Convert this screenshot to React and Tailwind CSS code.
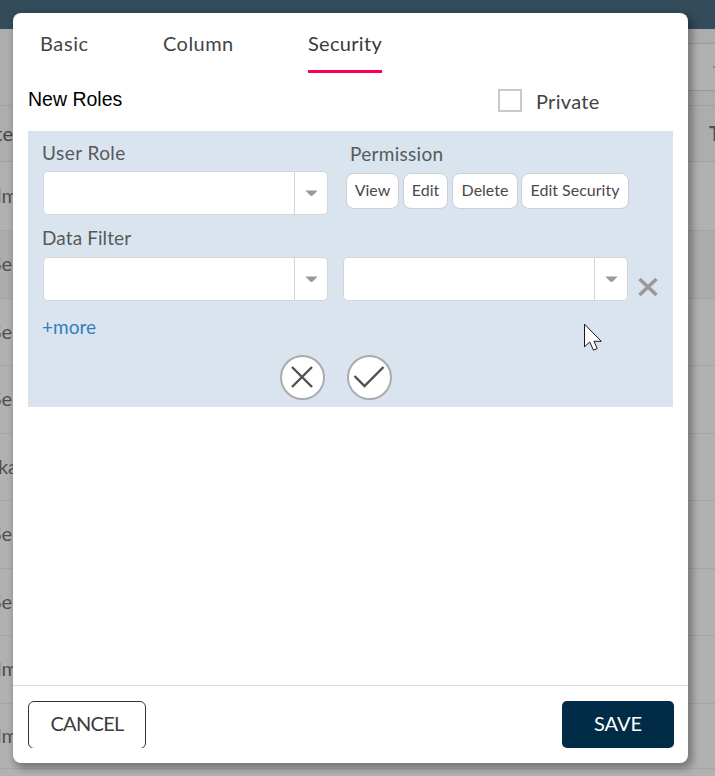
const rows = [
  { text: 'Adm', height: 'h-[69px]', bg: 'bg-[#b1b1b1]', nudge: 'w-[18px]' },
  { text: 'Se', height: 'h-[68px]', bg: 'bg-[#acacac]', nudge: 'w-[12px]' },
  { text: 'Se', height: 'h-[67px]', bg: 'bg-[#b1b1b1]', nudge: 'w-[12px]' },
  { text: 'Se', height: 'h-[68px]', bg: 'bg-[#b1b1b1]', nudge: 'w-[12px]' },
  { text: 'ka', height: 'h-[67px]', bg: 'bg-[#b1b1b1]', nudge: 'w-[18px]' },
  { text: 'Se', height: 'h-[68px]', bg: 'bg-[#b1b1b1]', nudge: 'w-[12px]' },
  { text: 'Se', height: 'h-[67px]', bg: 'bg-[#b1b1b1]', nudge: 'w-[12px]' },
  { text: 'Adm', height: 'h-[68px]', bg: 'bg-[#b1b1b1]', nudge: 'w-[18px]' },
  { text: 'Adm', height: 'h-[65px]', bg: 'bg-[#b1b1b1]', nudge: 'w-[18px]' },
];

function Backdrop() {
  return (
    <div className="flex h-full flex-col bg-[#b1b1b1] text-[20px] leading-none text-[#505050]">
      <div className="h-[29px] shrink-0 bg-[#334b5a]" />
      <div className="flex h-[77px] shrink-0 justify-end border-b border-[#a0a2a1] bg-[#acaead] pt-[14px]">
        <div className="flex h-[48px] w-[60px] items-center justify-end border-y border-[#989a99] bg-[#b1b1b1]">
          <div className="h-[2px] w-[2px] bg-[#8c8c8c]" />
        </div>
      </div>
      <div className="flex h-[56px] shrink-0 items-center justify-between border-b border-[#a0a2a1] bg-[#acaead] pb-[2px] font-bold">
        <span className="flex w-[13px] justify-end font-normal text-[#444]">te</span>
        <span className="w-[6px]">T</span>
      </div>
      {rows.map((row, i) => (
        <div
          key={i}
          className={`flex shrink-0 items-center border-b border-[#a5a5a5] pb-[3px] ${row.height} ${row.bg}`}
        >
          <span className={`flex justify-end ${row.nudge}`}>{row.text}</span>
        </div>
      ))}
    </div>
  );
}

function Select({ width }) {
  return (
    <div className={`flex h-[44px] rounded-[5px] border border-[#d3d7dc] bg-white ${width}`}>
      <div className="flex-1" />
      <div className="flex w-[33px] items-center justify-center border-l border-[#d3d5d8]">
        <svg width="13" height="7" viewBox="0 0 13 7">
          <path d="M.3.5h12.4L8 5.3Q6.5 6.8 5 5.3Z" fill="#999" />
        </svg>
      </div>
    </div>
  );
}

function Pill({ children, className }) {
  return (
    <button
      className={`flex h-[36px] items-center justify-center rounded-[8px] border border-[#cdcfd2] bg-white pb-[2px] text-[16px] whitespace-nowrap text-[#4a4a4a] ${className}`}
    >
      {children}
    </button>
  );
}

function RoundButton({ children }) {
  return (
    <button className="flex h-[45px] w-[45px] items-center justify-center rounded-full border-2 border-[#a9abad] bg-white pr-px pb-px">
      {children}
    </button>
  );
}

export default function App() {
  return (
    <div className="relative h-[776px] w-[715px] overflow-hidden font-['Lato',sans-serif] text-[#444]">
      <Backdrop />
      <div className="absolute top-[13px] left-[13px] flex h-[750px] w-[675px] flex-col rounded-[8px] bg-white shadow-[3px_4px_7px_2px_rgba(0,0,0,0.3)]">
        <nav className="flex h-[60px] shrink-0 pl-[26px] text-[20px] leading-[60px]">
          <span className="w-[124px] pl-px tracking-[0.6px]">Basic</span>
          <span className="w-[145px] tracking-[0.45px]">Column</span>
          <span className="h-[60px] w-[74px] border-b-[3px] border-[#ff0050] tracking-[0.3px] text-[#3a3a3a]">Security</span>
        </nav>

        <div className="flex h-[58px] shrink-0 items-start justify-between pr-[89px] pl-[15px]">
          <h2 className="mt-[15px] font-['Liberation_Sans',sans-serif] text-[19.5px] leading-[22px] text-black">New Roles</h2>
          <label className="mt-[16px] flex items-start">
            <span className="h-[23px] w-[24px] border-2 border-[#c9c9c9]" />
            <span className="ml-[14px] w-[63px] text-[20px] leading-[25px] tracking-[0.3px]">Private</span>
          </label>
        </div>

        <section className="mx-[15px] h-[276px] shrink-0 bg-[#dae4ef] pl-[15px] text-[#58595b]">
          <div className="flex">
            <div className="w-[303px]">
              <div className="-ml-px h-[40px] text-[19px] leading-[44px] tracking-[0.45px]">User Role</div>
              <Select width="w-[285px]" />
            </div>
            <div>
              <div className="h-[42px] pl-[4px] text-[19px] leading-[46px] tracking-[0.3px]">Permission</div>
              <div className="flex">
                <Pill className="w-[53px]">View</Pill>
                <Pill className="ml-[4px] w-[45px]">Edit</Pill>
                <Pill className="ml-[4px] w-[66px]">Delete</Pill>
                <Pill className="ml-[3px] w-[108px]">Edit Security</Pill>
              </div>
            </div>
          </div>
          <div className="-ml-px h-[42px] text-[19px] leading-[46px] tracking-[0.1px]">Data Filter</div>
          <div className="flex">
            <Select width="w-[285px]" />
            <div className="w-[15px]" />
            <Select width="w-[285px]" />
            <svg width="22" height="22" viewBox="0 0 22 22" className="mt-[19px] ml-[9px]">
              <path d="M2.5 3 19.5 19M19.5 3 2.5 19" stroke="#999" strokeWidth="3.6" fill="none" />
            </svg>
          </div>
          <a className="-ml-px block h-[54px] text-[19px] leading-[52px] text-[#3080bd]">+more</a>
          <div className="flex gap-[22px] pl-[237px]">
            <RoundButton>
              <svg width="24" height="24" viewBox="0 0 24 24">
                <path d="M2 2 22 22M22 2 2 22" stroke="#505050" strokeWidth="2.4" fill="none" />
              </svg>
            </RoundButton>
            <RoundButton>
              <svg width="32" height="24" viewBox="0 0 32 24" className="shrink-0">
                <path d="M1.5 11 11.5 21 30.5 2" stroke="#505050" strokeWidth="2.4" fill="none" />
              </svg>
            </RoundButton>
          </div>
        </section>

        <footer className="mt-auto flex h-[78px] shrink-0 items-start justify-between border-t border-[#d7d9e0] px-[15px] pt-[15px] text-[20px]">
          <div className="h-[47px] overflow-hidden">
            <button className="flex h-[48px] w-[118px] items-center justify-center rounded-[6px] border border-[#333] pb-[4px] tracking-[-0.7px] text-[#3c3c3c]">
              CANCEL
            </button>
          </div>
          <button className="mr-[-1px] flex h-[47px] w-[112px] items-center justify-center rounded-[5px] bg-[#002c48] pb-[3px] text-white">
            SAVE
          </button>
        </footer>
      </div>

      <svg width="20" height="29" viewBox="0 0 20 29" className="absolute top-[323px] left-[584px]">
        <path d="M.5 1.2V23.8L5.7 19 9.5 27.2 13.2 25.6 10 18.3H17.3Z" fill="#fff" stroke="#15182b" strokeWidth="1" />
      </svg>
    </div>
  );
}
